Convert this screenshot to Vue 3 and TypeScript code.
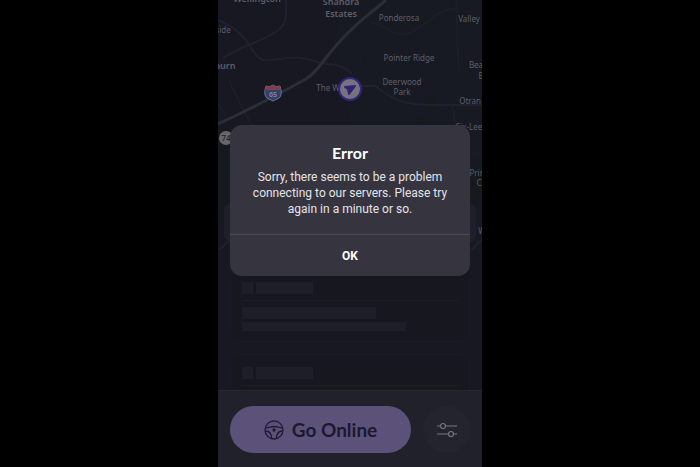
<script setup lang="ts">
import { ref } from 'vue'

interface Label {
  text: string
  x: number
  y: number
  large?: boolean
}

const labels: Label[] = [
  { text: 'Wellington', x: 39, y: 2, large: true },
  { text: 'Shandra', x: 123, y: 5, large: true },
  { text: 'Estates', x: 123, y: 17, large: true },
  { text: 'side', x: 5, y: 33 },
  { text: 'burn', x: 7, y: 69, large: true },
  { text: 'Ponderosa', x: 181, y: 21 },
  { text: 'Valley', x: 251, y: 22 },
  { text: 'Pointer Ridge', x: 191, y: 61 },
  { text: 'Deerwood', x: 184, y: 85 },
  { text: 'Park', x: 184, y: 95 },
  { text: 'The W', x: 110, y: 91 },
  { text: 'Bea', x: 258, y: 68 },
  { text: 'B', x: 263, y: 79 },
  { text: 'Otran', x: 252, y: 104 },
  { text: 'Six-Lee', x: 251, y: 130 },
  { text: 'Prin', x: 259, y: 176 },
  { text: 'C', x: 261, y: 186 },
  { text: 'W', x: 264, y: 234 },
]

const open = ref(true)
const cards = [1, 2]
</script>

<template>
  <div class="stage">
    <main class="phone">
      <div class="content">
        <svg class="map" viewBox="0 0 264 250" aria-label="Map">
          <rect width="264" height="250" fill="#171822" />
          <path d="M120 0H264V250H180C170 170 110 140 120 0Z" fill="#171a22" />
          <g fill="#141a1e">
            <path d="M37 12l8-5 8 4-4 5-10 2zM206 97l8-4 6 5-4 5-9-1zM198 118l7-2 4 6-8 3zM145 60l4-4-2 9z" />
            <path d="M0 140h12v75H0zM253 158h11v38l-11 12z" />
          </g>
          <g class="roads">
            <path d="M68 0C69 20 68 26 56 33C42 42 28 44 5 58" />
            <path d="M0 20C18 28 26 36 32 46C42 63 45 61 62 59C90 54 96 63 108 64C120 64 126 67 134 74" />
            <path d="M0 104L8 116M11 79C16 95 26 108 33 125" opacity=".6" />
            <path d="M132 86H157L170 95C185 107 212 105 264 105" />
            <path d="M152 22C168 25 175 36 187 34C205 31 219 6 240 9M238 0C241 30 237 50 242 70M232 105C239 111 234 118 238 126" opacity=".5" />
            <path d="M0 251L14 238M252 252L264 239" />
          </g>
          <path class="highway" d="M0 124C26 112 52 99 88 79C102 71 106 55 134 29C145 18 153 13 168 0" />
          <text
            v-for="label in labels"
            :key="label.text"
            :x="label.x"
            :y="label.y"
            :class="['label', { large: label.large }]"
          >{{ label.text }}</text>
          <circle cx="8" cy="138" r="7" fill="#68676e" />
          <text class="route" x="8" y="141">74</text>
          <path d="M48 86q4 2 7-1q3 3 7 1q3 9-1 12l-6 3l-6-3q-4-3-1-12Z" fill="#2f4071" stroke="#77717f" />
          <path d="M48 86q4 2 7-1q3 3 7 1l1 4H47Z" fill="#7c3f4c" />
          <text class="shield" x="55" y="97">65</text>
          <circle cx="132" cy="89" r="11" fill="#77727d" stroke="#35247d" stroke-width="2" />
          <path d="M127 87l10-1-6 8-1-5Z" fill="#332277" stroke="#332277" stroke-width="2" stroke-linejoin="round" />
        </svg>

        <div class="banner"></div>

        <section class="feed" aria-label="Loading">
          <article v-for="card in cards" :key="card" class="card">
            <div class="heading"><i class="bone square"></i><i class="bone title"></i></div>
            <div class="detail">
              <i class="bone wide"></i>
              <i class="bone widest"></i>
            </div>
          </article>
        </section>
      </div>

      <footer class="actions">
        <button class="online" type="button">
          <svg viewBox="0 0 20 20" width="20" height="20" aria-hidden="true">
            <circle cx="10" cy="10" r="9" />
            <path d="M1.500 8C5 8 7 6.500 10 6.500S15 8 18.500 8M1.500 11C5.500 11 7.500 13 7.500 18.500M18.500 11C14.500 11 12.500 13 12.500 18.500" />
            <circle class="hub" cx="10" cy="10" r="1" />
          </svg>
          <span>Go Online</span>
        </button>
        <button class="filters" type="button" aria-label="Preferences">
          <svg viewBox="0 0 20 16" width="20" height="16" aria-hidden="true">
            <path d="M0 4H3.500M8.500 4H20M0 12H11.500M16.500 12H20" />
            <circle cx="6" cy="4" r="2.500" />
            <circle cx="14" cy="12" r="2.500" />
          </svg>
        </button>
      </footer>

      <div v-if="open" class="overlay">
        <div class="dialog" role="alertdialog" aria-labelledby="dialog-title" aria-describedby="dialog-text">
          <div class="message">
            <h1 id="dialog-title">Error</h1>
            <p id="dialog-text">Sorry, there seems to be a problem connecting to our servers. Please try again in a minute or so.</p>
          </div>
          <button class="confirm" type="button" @click="open = false">OK</button>
        </div>
      </div>
    </main>
  </div>
</template>

<style>
body {
  margin: 0;
  background: #000;
}
</style>

<style scoped>
.stage {
  display: flex;
  justify-content: center;
  height: 100vh;
  background: #000;
  font-family: Lato, "Open Sans", sans-serif;
}

.phone {
  position: relative;
  display: flex;
  flex-direction: column;
  width: 100%;
  max-width: 264px;
  overflow: hidden;
  background: #181822;
}

.content {
  flex: 1;
  min-height: 0;
  overflow: hidden;
}

.map {
  display: block;
  width: 100%;
}

.roads {
  fill: none;
  stroke: #20212c;
  stroke-width: 2;
}

.highway {
  fill: none;
  stroke: #2b2d38;
  stroke-width: 3;
}

.label {
  fill: #5e5e68;
  font-family: "Noto Sans", sans-serif;
  font-size: 8px;
  text-anchor: middle;
}

.large {
  font-size: 9px;
  font-weight: 600;
}

.route,
.shield {
  fill: #26262e;
  font-family: "Noto Sans", sans-serif;
  font-size: 8px;
  font-weight: 600;
  text-anchor: middle;
}

.shield {
  fill: #8a899a;
  font-size: 7px;
}

.banner {
  height: 40px;
  margin: -47px 6px 0;
  border-radius: 8px;
  background: #1f1f2a;
  position: relative;
}

.feed {
  display: grid;
  gap: 12px;
  padding: 26px 12px 0;
}

.card {
  padding: 12px 11px 10px;
  border: 1px solid #1b1b25;
  border-radius: 10px;
  background: #171720;
}

.heading {
  display: flex;
  gap: 3px;
  padding-bottom: 6px;
  border-bottom: 1px solid #1e1e22;
}

.detail {
  display: grid;
  gap: 3px;
  padding-top: 6px;
}

.bone {
  height: 12px;
  background: #1e1e29;
}

.square {
  width: 11px;
}

.title {
  width: 57px;
}

.wide {
  width: 62%;
}

.widest {
  width: 76%;
  height: 9px;
}

.actions {
  display: flex;
  gap: 12px;
  padding: 15px 12px 14px;
  border-top: 1px solid #272731;
  background: #21212c;
}

button {
  padding: 0;
  border: 0;
  font-family: inherit;
  cursor: pointer;
}

.online {
  display: flex;
  flex: 1;
  align-items: center;
  justify-content: center;
  gap: 8px;
  height: 47px;
  border-radius: 24px;
  background: #5b5179;
  color: #1b1930;
  font-size: 19px;
  font-weight: 700;
}

.online svg {
  fill: none;
  stroke: #1f1c34;
  stroke-width: 1.3;
}

.online .hub {
  fill: #1f1c34;
}

.filters {
  display: grid;
  place-items: center;
  width: 47px;
  height: 47px;
  border-radius: 50%;
  background: #24242e;
}

.filters svg {
  fill: none;
  stroke: #77767b;
  stroke-width: 1.2;
}

.overlay {
  position: absolute;
  inset: 0;
  padding: 125px 12px 0;
}

.dialog {
  overflow: hidden;
  border-radius: 12px;
  background: #35343f;
  color: #fff;
  text-align: center;
}

.message {
  padding: 18px 16px 17px;
}

h1 {
  margin: 0 0 6px;
  font-size: 16px;
  line-height: 20px;
}

p {
  margin: 0;
  color: #e4e4e8;
  font-family: Roboto, sans-serif;
  font-size: 12px;
  line-height: 16px;
}

.confirm {
  display: block;
  width: 100%;
  height: 42px;
  border-top: 1px solid #4a4954;
  background: transparent;
  color: #fff;
  font-family: Roboto, sans-serif;
  font-size: 12px;
  font-weight: 700;
}
</style>
